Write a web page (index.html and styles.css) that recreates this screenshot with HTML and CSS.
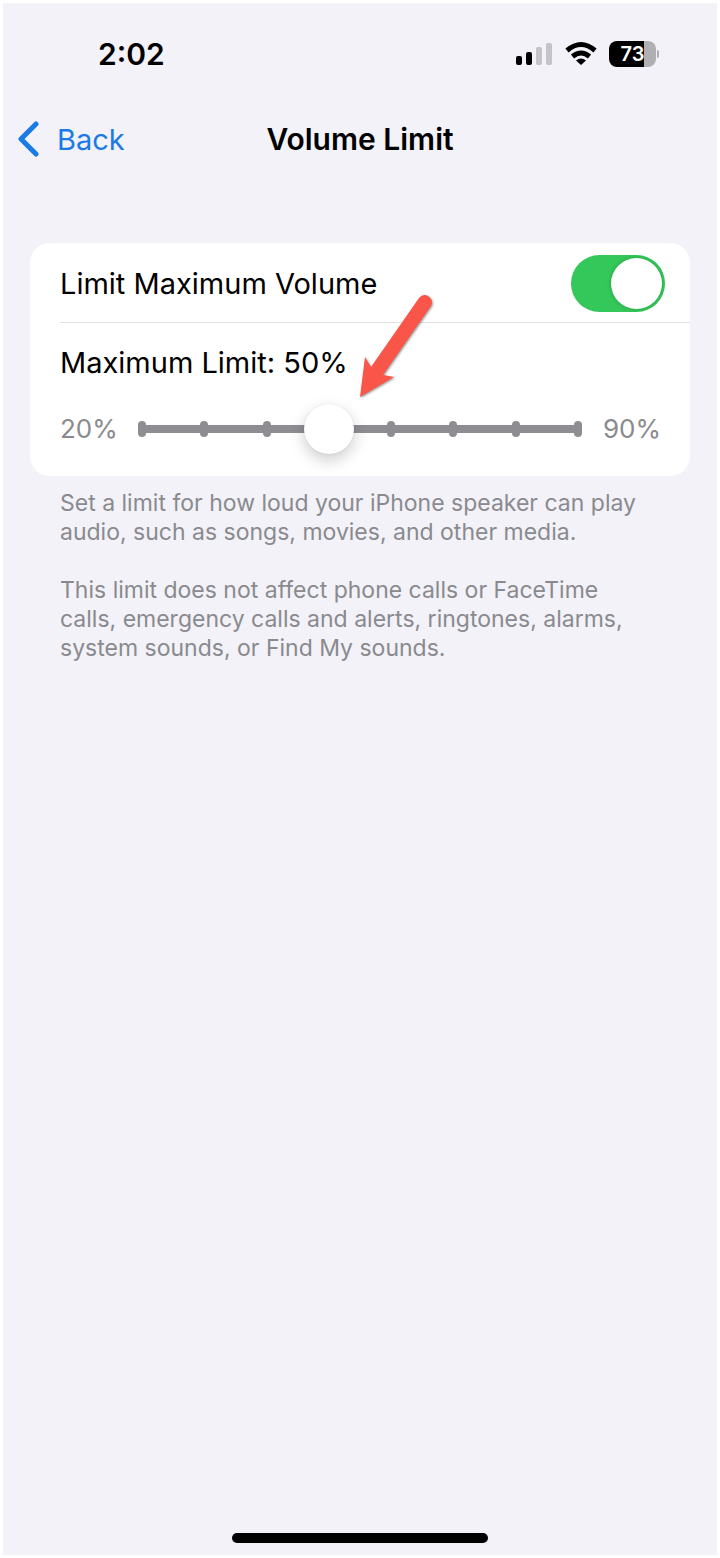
FILE: index.html
```html
<!DOCTYPE html>
<html lang="en">

<head>
    <meta charset="UTF-8">
    <meta name="viewport" content="width=device-width, initial-scale=1.0">
    <title>Volume Limit</title>
    <link rel="stylesheet" href="styles.css">
</head>

<body>
    <div class="screen">
        <div class="status-bar">
            <span class="time">2:02</span>
            <div class="status-icons">
                <svg width="38" height="26" viewBox="0 0 38 26" aria-hidden="true">
                    <rect x="1" y="15" width="6" height="9" rx="2" />
                    <rect x="11" y="11" width="6" height="13" rx="2" />
                    <rect class="dim" x="21" y="6" width="6" height="18" rx="2" />
                    <rect class="dim" x="31" y="2" width="6" height="22" rx="2" />
                </svg>
                <svg width="32" height="26" viewBox="0 0 32 26" aria-hidden="true">
                    <path class="wave" d="M2 9.500Q16 -2.500 30 9.500" />
                    <path class="wave" d="M7.500 15.500Q16 8.500 24.500 15.500" />
                    <path d="M16 24L11 19.500Q16 15.500 21 19.500Z" />
                </svg>
                <div class="battery"><span>73</span></div>
            </div>
        </div>

        <header class="nav-bar">
            <a class="back" href="#">
                <svg width="22" height="36" viewBox="0 0 22 36" aria-hidden="true">
                    <path d="M19 3L4 18L19 33" />
                </svg>
                Back
            </a>
            <h1>Volume Limit</h1>
        </header>

        <main>
            <section class="card">
                <div class="row">
                    <label for="limitToggle">Limit Maximum Volume</label>
                    <input type="checkbox" id="limitToggle" class="toggle" checked>
                </div>
                <div class="limit">
                    <label for="volume">Maximum Limit: <span id="volumeValue">50%</span></label>
                    <div class="slider-row">
                        <span>20%</span>
                        <div class="slider">
                            <div class="ticks">
                                <i></i><i></i><i></i><i></i><i></i><i></i><i></i><i></i>
                            </div>
                            <input type="range" id="volume" min="20" max="90" step="10" value="50">
                        </div>
                        <span class="max">90%</span>
                    </div>
                </div>
                <svg class="arrow" width="80" height="110" viewBox="0 0 80 110" aria-hidden="true">
                    <path d="M5 105L10 65L16 75L64 6Q68 1 73 4Q79 8 76 14L28 83L39 85Z" />
                </svg>
            </section>
            <div class="notes">
                <p>Set a limit for how loud your iPhone speaker can play audio, such as songs, movies, and other media.</p>
                <p>This limit does not affect phone calls or FaceTime calls, emergency calls and alerts, ringtones, alarms, system sounds, or Find My sounds.</p>
            </div>
        </main>

        <div class="home-indicator"></div>
    </div>

    <script>
        const volume = document.getElementById('volume');

        volume.addEventListener('input', () => {
            document.getElementById('volumeValue').textContent = volume.value + '%';
        });
    </script>
</body>

</html>
```
FILE: styles.css
```css
* {
    box-sizing: border-box;
}

body {
    margin: 0;
    padding: 3px;
    min-height: 100vh;
    display: flex;
    background-color: white;
    color: #000;
    font-family: Inter, "Liberation Sans", sans-serif;
    font-size: 29px;
}

.screen {
    flex: 1;
    display: flex;
    flex-direction: column;
    background-color: #f2f2f8;
}

.status-bar {
    display: flex;
    justify-content: space-between;
    align-items: center;
    height: 102px;
    padding: 0 61px 0 95px;
}

.time {
    font-size: 30px;
    font-weight: 600;
}

.status-icons {
    display: flex;
    align-items: center;
    gap: 12px;
}

.dim {
    fill: #c3c3c8;
}

.wave {
    fill: none;
    stroke: #000;
    stroke-width: 5;
}

.battery {
    position: relative;
    width: 47px;
    height: 26px;
    border-radius: 8px;
    background: linear-gradient(to right, #000 74%, #b0b0b4 74%);
    color: white;
    font-size: 20px;
    font-weight: 600;
    line-height: 26px;
    text-align: center;
}

.battery::after {
    content: "";
    position: absolute;
    right: -3px;
    top: 9px;
    width: 2px;
    height: 8px;
    border-radius: 0 2px 2px 0;
    background-color: #b0b0b4;
}

.nav-bar {
    display: grid;
    grid-template-columns: 1fr auto 1fr;
    align-items: center;
    height: 68px;
    padding: 0 14px;
}

.back {
    display: flex;
    align-items: center;
    gap: 18px;
    color: #1a7ae6;
    text-decoration: none;
}

.back path {
    fill: none;
    stroke: #1a7ae6;
    stroke-width: 5;
    stroke-linecap: round;
    stroke-linejoin: round;
}

h1 {
    margin: 0;
    font-size: 30px;
    font-weight: 600;
}

main {
    flex: 1;
    padding: 70px 27px 0;
}

.card {
    position: relative;
    border-radius: 20px;
    background-color: white;
}

.row {
    display: flex;
    justify-content: space-between;
    align-items: center;
    height: 80px;
    margin-left: 30px;
    padding: 2px 25px 0 0;
    border-bottom: 1px solid #e0e0e3;
}

.toggle {
    appearance: none;
    display: flex;
    justify-content: flex-end;
    width: 94px;
    height: 57px;
    margin: 0;
    padding: 3px;
    border-radius: 29px;
    background-color: #34c759;
    cursor: pointer;
}

.toggle::before {
    content: "";
    width: 51px;
    height: 51px;
    border-radius: 50%;
    background-color: white;
    box-shadow: 0 0 4px rgba(0, 0, 0, 0.2);
}

.toggle:not(:checked) {
    justify-content: flex-start;
    background-color: #e9e9eb;
}

.limit {
    padding: 20px 30px;
}

.limit label {
    display: block;
    line-height: 40px;
}

.slider-row {
    display: grid;
    grid-template-columns: 57px 1fr 57px;
    align-items: center;
    height: 73px;
    padding-top: 18px;
    color: #8a8a8e;
    font-size: 26px;
}

.max {
    text-align: right;
}

.slider {
    display: grid;
    align-items: center;
}

.slider > * {
    grid-area: 1 / 1;
}

.ticks {
    display: flex;
    justify-content: space-between;
    margin: 0 21px;
    background: linear-gradient(#8e8e92, #8e8e92) center / calc(100% - 4px) 8px no-repeat;
}

.ticks i {
    width: 8px;
    height: 16px;
    border-radius: 4px;
    background-color: #8e8e92;
}

#volume {
    appearance: none;
    width: 100%;
    height: 52px;
    margin: 0;
    background: none;
    cursor: pointer;
}

#volume::-webkit-slider-thumb {
    appearance: none;
    width: 50px;
    height: 50px;
    border-radius: 50%;
    background-color: white;
    box-shadow: 0 0 2px rgba(0, 0, 0, 0.1), 0 6px 16px rgba(0, 0, 0, 0.2);
}

.arrow {
    position: absolute;
    left: 325px;
    top: 49px;
    fill: #fa5549;
    filter: drop-shadow(1px 1px 1px rgba(0, 0, 0, 0.4));
    pointer-events: none;
}

.notes {
    padding: 13px 30px;
    color: #8a8a8e;
    font-size: 23px;
    line-height: 29px;
}

.notes p {
    margin: 0 0 29px;
}

.home-indicator {
    align-self: center;
    width: 256px;
    height: 10px;
    margin-bottom: 12px;
    border-radius: 5px;
    background-color: #000;
}
```
